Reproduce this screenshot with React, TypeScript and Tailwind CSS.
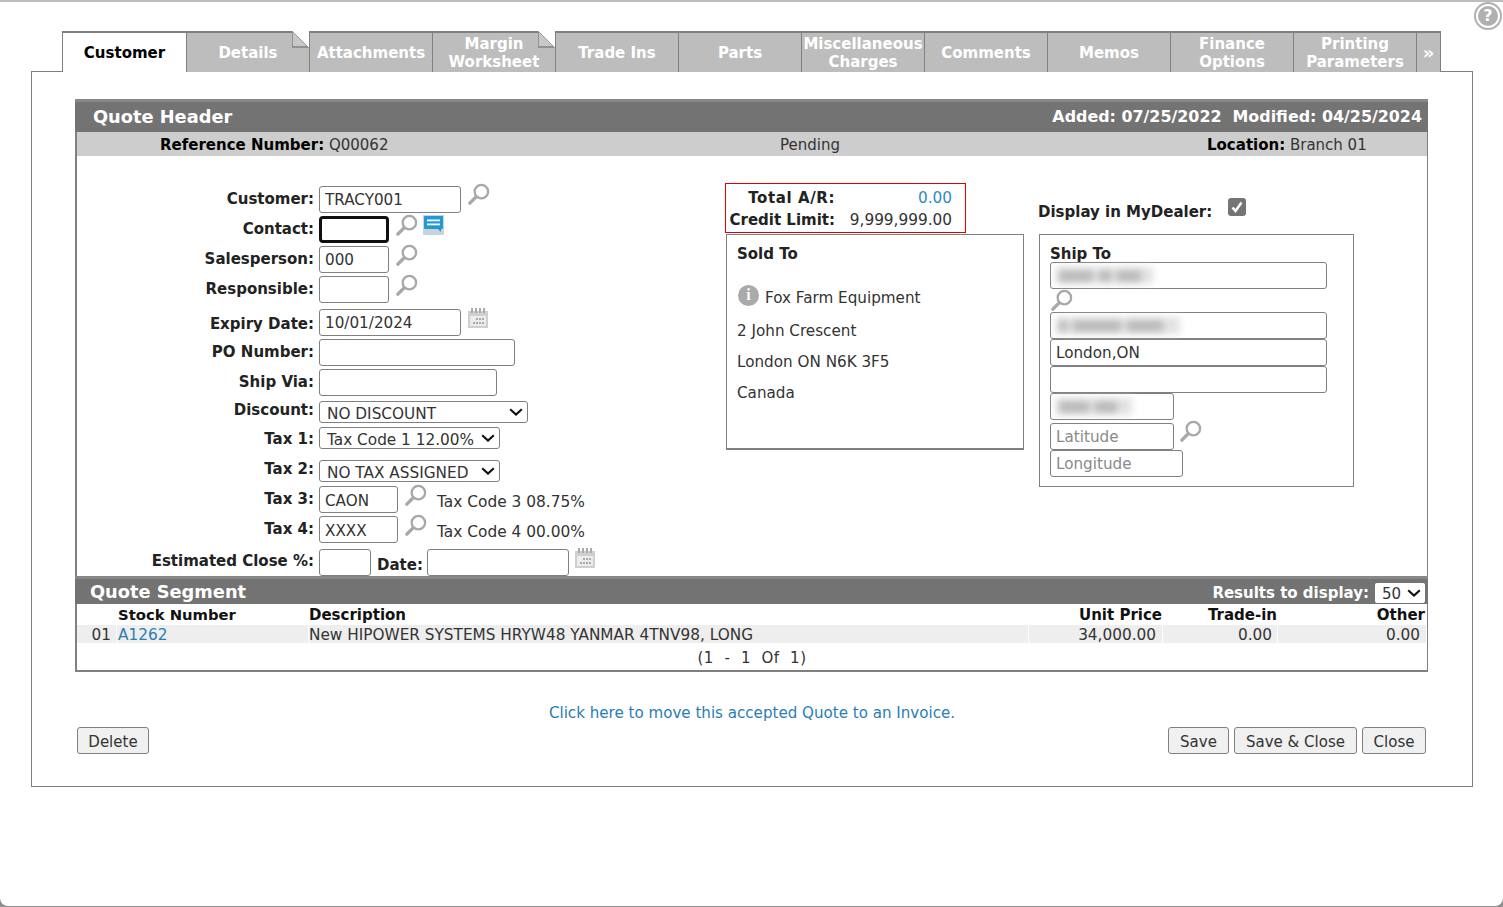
import React from "react";

const inputCls =
  "h-[27px] shrink-0 rounded-[3px] border border-[#808080] bg-white px-[5px] text-[15.2px] text-[#333] outline-none placeholder:text-[#8a8a8a]";
const btnCls =
  "h-[27px] rounded-[3px] border border-[#808080] bg-[#f0f0f0] pt-[3px] text-[15px] text-[#333]";
const cellCls = "h-[18px] bg-[#eee] leading-[20px]";
const tableCols = "grid grid-cols-[40px_192px_720px_134px_115px_148px] items-center";

const tabs = [
  { label: ["Customer"], active: true },
  { label: ["Details"], fold: true },
  { label: ["Attachments"] },
  { label: ["Margin", "Worksheet"], fold: true },
  { label: ["Trade Ins"] },
  { label: ["Parts"] },
  { label: ["Miscellaneous", "Charges"] },
  { label: ["Comments"] },
  { label: ["Memos"] },
  { label: ["Finance", "Options"] },
  { label: ["Printing", "Parameters"] },
];

const Magnifier = ({ className = "" }: { className?: string }) => (
  <svg viewBox="0 0 24 24" className={"h-[23px] w-[23px] shrink-0 " + className} fill="none">
    <circle cx="15" cy="9" r="7" stroke="#a8a8a8" strokeWidth="2.4" />
    <line x1="9.5" y1="14.5" x2="3" y2="21" stroke="#a8a8a8" strokeWidth="3.6" strokeLinecap="round" />
  </svg>
);

const Calendar = ({ className = "" }: { className?: string }) => (
  <svg viewBox="0 0 20 20" className={"h-[20px] w-[20px] shrink-0 " + className}>
    <rect x="0" y="3" width="20" height="17" fill="#cfcfcf" />
    <rect x="2" y="8" width="16" height="10" fill="#ececec" />
    <g fill="#aaa">
      <rect x="3" y="0" width="2" height="5" />
      <rect x="7" y="0" width="2" height="5" />
      <rect x="11" y="0" width="2" height="5" />
      <rect x="15" y="0" width="2" height="5" />
      <rect x="8" y="10" width="2" height="2" />
      <rect x="11" y="10" width="2" height="2" />
      <rect x="14" y="10" width="2" height="2" />
      <rect x="5" y="14" width="2" height="2" />
      <rect x="8" y="14" width="2" height="2" />
      <rect x="11" y="14" width="2" height="2" />
      <rect x="14" y="14" width="2" height="2" />
    </g>
  </svg>
);

const Chevron = ({ className = "" }: { className?: string }) => (
  <svg viewBox="0 0 14 8" className={"pointer-events-none absolute h-[8px] w-[14px] " + className} fill="none">
    <path d="M1.2 1.2L7 6.6l5.8-5.4" stroke="#111" strokeWidth="2.1" />
  </svg>
);

const Select = ({ value, width }: { value: string; width: string }) => (
  <div className={"relative shrink-0 " + width}>
    <select
      defaultValue={value}
      className="block h-[22px] w-full appearance-none rounded-[3px] border border-[#808080] bg-white pl-[7px] pt-px text-[15.3px] text-[#333] outline-none"
    >
      <option>{value}</option>
    </select>
    <Chevron className="right-[5px] top-[7px]" />
  </div>
);

const Row = ({
  label,
  labelCls = "leading-[26px]",
  className = "",
  children,
}: {
  label: string;
  labelCls?: string;
  className?: string;
  children: React.ReactNode;
}) => (
  <div className={"flex items-start " + className}>
    <div className={"h-[22px] w-[242px] shrink-0 whitespace-nowrap pr-[5px] text-right text-[15px] font-bold text-[#222] " + labelCls}>
      {label}
    </div>
    {children}
  </div>
);

// address lines that are blurred out in the screenshot
const Smudge = ({ width, parts }: { width: string; parts: string[] }) => (
  <div className={"flex h-[17px] items-center gap-[6px] bg-[#e2e2e2] px-[3px] blur-[3.5px] " + width}>
    {parts.map((p, i) => (
      <div key={i} className={"h-[12px] bg-[#bbb] " + p} />
    ))}
  </div>
);

export default function App() {
  return (
    <div className="h-[907px] w-[1503px] overflow-hidden bg-[#8f8f8f] font-['DejaVu_Sans',sans-serif] text-[15px] text-[#333]">
      <div className="relative h-[906px] rounded-b-[8px] border-t-2 border-[#bdbdbd] bg-white pt-[29px]">
        {/* help */}
        <div className="absolute right-[1px] top-0 flex h-[28px] w-[28px] items-center justify-center rounded-full border-[2px] border-[#b0b0b0] bg-white">
          <div className="flex h-[20px] w-[20px] items-center justify-center rounded-full bg-[#b0b0b0] text-[16px] font-bold leading-none text-white">
            ?
          </div>
        </div>

        {/* tabs */}
        <div className="relative z-10 -mb-px ml-[62px] flex h-[41px] w-[1379px] items-stretch">
          {tabs.map((t, i) => (
            <div
              key={i}
              className={
                "relative flex w-[123px] shrink-0 flex-col items-center justify-center border-t-2 border-[#808080] text-[15px] font-bold leading-[18px] " +
                (t.active
                  ? "w-[124px] border-l border-r-0 bg-white text-black"
                  : "border-l bg-[#bdbdbd] text-white")
              }
            >
              {t.label.map((l) => (
                <span key={l} className="whitespace-nowrap">
                  {l}
                </span>
              ))}
              {t.fold && (
                <svg viewBox="0 0 17 17" className="absolute -top-[2px] right-0 h-[17px] w-[17px]">
                  <polygon points="0,0 17,0 17,17" fill="#fff" />
                  <polygon points="0,0 17,17 0,17" fill="#c8c8c8" />
                  <polyline points="0,0 0,16 16,16" fill="none" stroke="#808080" strokeWidth="1.5" />
                  <line x1="0" y1="0" x2="17" y2="17" stroke="#9a9a9a" strokeWidth="1" />
                </svg>
              )}
            </div>
          ))}
          <div className="flex w-[25px] shrink-0 items-center justify-center border-x border-t-2 border-[#808080] bg-[#bdbdbd] text-[18px] font-bold text-white">
            »
          </div>
        </div>

        {/* panel */}
        <div className="ml-[31px] h-[716px] w-[1442px] border border-[#808080] px-[43px] pt-[27px]">
          <div className="w-[1353px] border-b-2 border-l-2 border-r border-[#808080]">
            <div className="-ml-[2px] -mr-px flex h-[33px] items-center justify-between border-t-[3px] border-[#888] bg-[#737373] pl-[18px] pr-[6px] font-bold text-white">
              <span className="text-[17.8px]">Quote Header</span>
              <span className="whitespace-pre text-[15.9px]">Added: 07/25/2022  Modified: 04/25/2024</span>
            </div>
            <div className="flex h-[24px] items-center bg-[#cdcdcd] pt-[2px] text-[15px]">
              <div className="w-[703px] pl-[83px]">
                <b className="text-black">Reference Number:</b> Q00062
              </div>
              <div className="w-[427px]">Pending</div>
              <div>
                <b className="text-black">Location:</b> Branch 01
              </div>
            </div>

            {/* form */}
            <div className="flex h-[420px]">
              <div className="w-[648px] shrink-0 pt-[30px]">
                <Row label="Customer:">
                  <input readOnly defaultValue="TRACY001" className={inputCls + " w-[142px]"} />
                  <Magnifier className="-mt-[3px] ml-[6px]" />
                </Row>
                <Row label="Contact:" className="mt-[3px]">
                  <input readOnly className="h-[27px] w-[70px] shrink-0 rounded-[4px] border-[3px] border-[#101010] bg-white outline-none" />
                  <Magnifier className="-mt-[2px] ml-[6px]" />
                  <svg viewBox="0 0 21 20" className="-mt-[1px] ml-[5px] h-[20px] w-[21px]">
                    <rect width="21" height="20" fill="#c9d3da" />
                    <path d="M2 1h17a1 1 0 0 1 1 1v11a1 1 0 0 1-1 1h-1v3l-3-3H2a1 1 0 0 1-1-1V2a1 1 0 0 1 1-1z" fill="#1f9ad6" />
                    <rect x="4" y="4.5" width="13" height="1.8" fill="#fff" />
                    <rect x="4" y="8.5" width="13" height="1.8" fill="#fff" />
                  </svg>
                </Row>
                <Row label="Salesperson:" className="mt-[3px]">
                  <input readOnly defaultValue="000" className={inputCls + " w-[70px]"} />
                  <Magnifier className="-mt-[2px] ml-[6px]" />
                </Row>
                <Row label="Responsible:" className="mt-[3px]">
                  <input readOnly className={inputCls + " w-[70px]"} />
                  <Magnifier className="-mt-[2px] ml-[6px]" />
                </Row>
                <Row label="Expiry Date:" labelCls="leading-[30px]" className="mt-[6px]">
                  <input readOnly defaultValue="10/01/2024" className={inputCls + " w-[142px]"} />
                  <Calendar className="-mt-[1px] ml-[7px]" />
                </Row>
                <Row label="PO Number:" className="mt-[3px]">
                  <input readOnly className={inputCls + " w-[196px]"} />
                </Row>
                <Row label="Ship Via:" className="mt-[3px]">
                  <input readOnly className={inputCls + " w-[178px]"} />
                </Row>
                <Row label="Discount:" labelCls="leading-[18px]" className="mt-[5px]">
                  <Select value="NO DISCOUNT" width="w-[209px]" />
                </Row>
                <Row label="Tax 1:" labelCls="leading-[24px]" className="mt-[4px]">
                  <Select value="Tax Code 1 12.00%" width="w-[181px]" />
                </Row>
                <Row label="Tax 2:" labelCls="leading-[18px]" className="mt-[11px]">
                  <Select value="NO TAX ASSIGNED" width="w-[181px]" />
                </Row>
                <Row label="Tax 3:" className="mt-[4px]">
                  <input readOnly defaultValue="CAON" className={inputCls + " w-[79px] pt-[3px]"} />
                  <Magnifier className="-mt-[2px] ml-[6px]" />
                  <span className="ml-[10px] mt-[6px] text-[15.4px] leading-[20px]">Tax Code 3 08.75%</span>
                </Row>
                <Row label="Tax 4:" className="mt-[3px]">
                  <input readOnly defaultValue="XXXX" className={inputCls + " w-[79px] pt-[3px]"} />
                  <Magnifier className="-mt-[2px] ml-[6px]" />
                  <span className="ml-[10px] mt-[6px] text-[15.4px] leading-[20px]">Tax Code 4 00.00%</span>
                </Row>
                <Row label="Estimated Close %:" labelCls="leading-[24px]" className="mt-[6px]">
                  <input readOnly className={inputCls + " w-[52px]"} />
                  <span className="ml-[6px] mt-[6px] font-bold leading-[20px] text-[#222]">Date:</span>
                  <input readOnly className={inputCls + " ml-[4px] w-[142px]"} />
                  <Calendar className="-mt-[1px] ml-[6px]" />
                </Row>
              </div>

              <div className="w-[299px] shrink-0 pt-[27px]">
                <div className="grid h-[50px] w-[241px] grid-cols-[109px_117px] content-center gap-y-[2px] border border-[#e00000] pt-[2px] leading-[20px]">
                  <b className="text-right tracking-[0.6px] text-[#222]">Total A/R:</b>
                  <span className="text-right text-[15.3px] text-[#2a8ac8]">0.00</span>
                  <b className="text-right text-[#222]">Credit Limit:</b>
                  <span className="text-right text-[15.3px]">9,999,999.00</span>
                </div>
                <div className="ml-px mt-px h-[216px] w-[298px] border border-b-2 border-[#808080] pl-[10px] pt-[9px] text-[15.2px]">
                  <b className="block text-[15px] leading-[20px] text-[#222]">Sold To</b>
                  <div className="mt-[22px] flex h-[24px] items-center">
                    <div className="ml-px flex h-[21px] w-[21px] -translate-y-[3px] items-center justify-center rounded-full bg-[#aaa] font-['Liberation_Serif',serif] text-[16px] font-bold text-white">
                      i
                    </div>
                    <span className="ml-[6px]">Fox Farm Equipment</span>
                  </div>
                  <div className="mt-[11px] leading-[20px]">2 John Crescent</div>
                  <div className="mt-[11px] leading-[20px]">London ON N6K 3F5</div>
                  <div className="mt-[11px] leading-[20px]">Canada</div>
                </div>
              </div>

              <div className="ml-[15px] w-[315px] shrink-0 pt-[27px]">
                <div className="-ml-px flex h-[51px] items-start">
                  <b className="mt-[19px] whitespace-nowrap leading-[20px] text-[#222]">Display in MyDealer:</b>
                  <svg viewBox="0 0 18 18" className="ml-[16px] mt-[15px] h-[18px] w-[18px]">
                    <rect width="18" height="18" rx="3" fill="#757575" />
                    <path d="M4.5 9.5l3 3.5 6-8.5" fill="none" stroke="#fff" strokeWidth="2.4" />
                  </svg>
                </div>
                <div className="h-[253px] w-[315px] border border-[#808080] pl-[10px] pt-[9px]">
                  <b className="-mb-[2px] block leading-[20px] text-[#222]">Ship To</b>
                  <div className={inputCls + " flex w-[277px] items-center px-[2px]"}>
                    <Smudge width="w-[97px]" parts={["w-[34px]", "w-[12px]", "w-[24px]"]} />
                  </div>
                  <Magnifier className="block" />
                  <div className={inputCls + " flex w-[277px] items-center px-[2px]"}>
                    <Smudge width="w-[124px]" parts={["w-[8px]", "w-[48px]", "w-[36px]"]} />
                  </div>
                  <input readOnly defaultValue="London,ON" className={inputCls + " block w-[277px]"} />
                  <input readOnly className={inputCls + " block w-[277px]"} />
                  <div className={inputCls + " flex w-[124px] items-center px-[1px]"}>
                    <Smudge width="w-[76px]" parts={["w-[30px]", "w-[22px]"]} />
                  </div>
                  <div className="mt-[3px] flex items-start">
                    <input readOnly placeholder="Latitude" className={inputCls + " w-[124px]"} />
                    <Magnifier className="-mt-[3px] ml-[5px]" />
                  </div>
                  <input readOnly placeholder="Longitude" className={inputCls + " block w-[133px]"} />
                </div>
              </div>
            </div>

            {/* segment */}
            <div className="-ml-[2px] -mr-px flex h-[28px] items-center justify-between border-t-[3px] border-[#888] bg-[#737373] pl-[15px] pr-[3px] pt-[2px] font-bold text-white">
              <span className="text-[17.8px]">Quote Segment</span>
              <span className="flex items-center">
                <span className="pt-px">Results to display:</span>
                <span className="relative ml-[6px] block h-[20px] w-[50px]">
                  <select
                    defaultValue="50"
                    className="block h-[20px] w-full appearance-none rounded-[2px] bg-white pl-[7px] text-[15px] font-normal text-[#333] outline-none"
                  >
                    <option>50</option>
                  </select>
                  <Chevron className="right-[4px] top-[6px]" />
                </span>
              </span>
            </div>
            <div className={tableCols + " h-[21px] font-bold text-[#111]"}>
              <span />
              <span className="pl-px text-[14.8px]">Stock Number</span>
              <span>Description</span>
              <span className="pr-px text-right">Unit Price</span>
              <span className="pr-px text-right">Trade-in</span>
              <span className="pr-px text-right">Other</span>
            </div>
            <div className={tableCols + " h-[18px] text-[15.3px]"}>
              <span className={cellCls + " mr-px pr-[5px] text-right"}>01</span>
              <span className={cellCls + " mr-px pl-px text-[#2a7db5]"}>A1262</span>
              <span className={cellCls + " mr-px whitespace-nowrap"}>New HIPOWER SYSTEMS HRYW48 YANMAR 4TNV98, LONG</span>
              <span className={cellCls + " mr-px pr-[6px] text-right"}>34,000.00</span>
              <span className={cellCls + " mr-px pr-[5px] text-right"}>0.00</span>
              <span className={cellCls + " pr-[6px] text-right"}>0.00</span>
            </div>
            <div className="flex h-[27px] items-center justify-center whitespace-pre pt-[4px] tracking-[0.5px]">(1  -  1  Of  1)</div>
          </div>

          <div className="mt-[32px] text-center text-[15.1px] leading-[19px] text-[#2a7db5]">
            Click here to move this accepted Quote to an Invoice.
          </div>
          <div className="mt-[4px] flex w-[1353px] justify-between px-[2px]">
            <button className={btnCls + " w-[72px]"}>Delete</button>
            <div className="flex gap-[5px]">
              <button className={btnCls + " w-[61px]"}>Save</button>
              <button className={btnCls + " w-[123px]"}>Save &amp; Close</button>
              <button className={btnCls + " w-[64px]"}>Close</button>
            </div>
          </div>
        </div>
      </div>
    </div>
  );
}
